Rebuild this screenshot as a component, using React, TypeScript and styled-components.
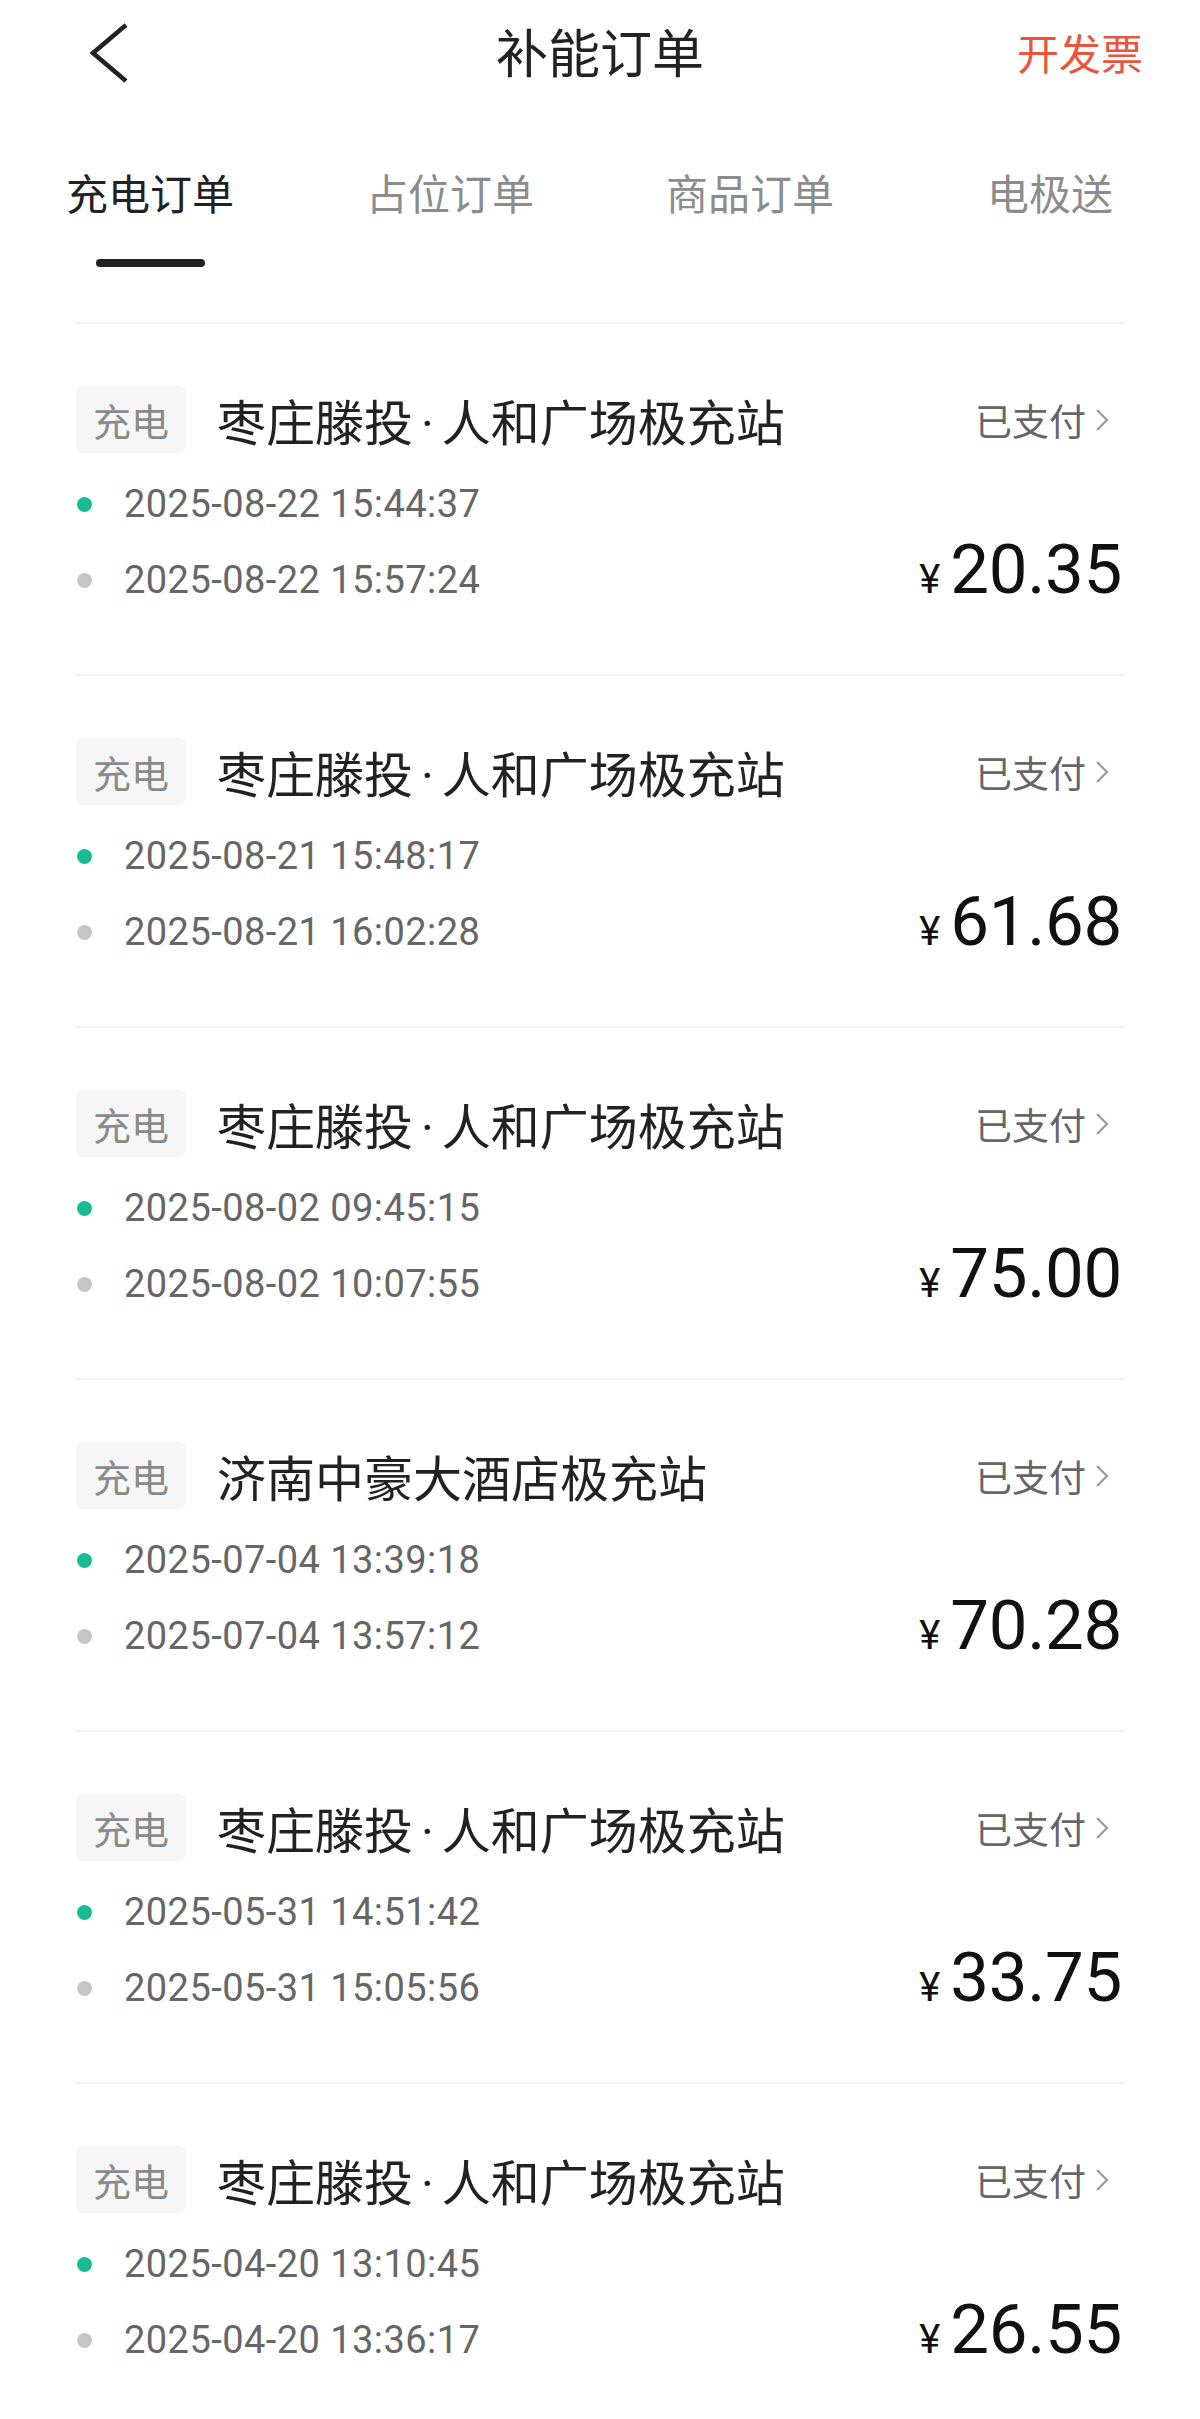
import React from "react";
import styled, { createGlobalStyle } from "styled-components";

const GlobalStyle = createGlobalStyle`
  html, body {
    margin: 0;
    padding: 0;
    background: #ffffff;
  }
  body {
    font-family: "Noto Sans CJK SC", "Noto Sans", sans-serif;
    color: #222;
  }
  * { box-sizing: border-box; }
`;

const Page = styled.div`
  width: 1200px;
  height: 2419px;
  overflow: hidden;
  background: #fff;
`;

const NavBar = styled.header`
  height: 106px;
  display: grid;
  grid-template-columns: 1fr auto 1fr;
  align-items: center;
  padding: 0 57px;
`;

const BackButton = styled.button`
  justify-self: start;
  border: 0;
  background: none;
  padding: 0;
  margin-left: 33px;
  display: flex;
  align-items: center;
  cursor: pointer;
`;

const Title = styled.h1`
  margin: 0 0 5px;
  font-size: 52px;
  font-weight: 400;
  line-height: 1;
  color: #222;
`;

const Action = styled.span`
  justify-self: end;
  font-size: 42px;
  line-height: 1;
  color: #e9553f;
  margin-bottom: 2px;
`;

const TabBar = styled.nav`
  display: grid;
  grid-template-columns: repeat(4, 300px);
  padding: 56px 0 55px;
`;

const Tab = styled.div<{ $active?: boolean }>`
  display: flex;
  flex-direction: column;
  align-items: center;
  font-size: 42px;
  line-height: 60px;
  color: ${(p) => (p.$active ? "#222" : "#8c8c8c")};
  white-space: nowrap;
`;

const Indicator = styled.span<{ $active?: boolean }>`
  margin-top: 37px;
  width: 109px;
  height: 8px;
  border-radius: 4px;
  background: ${(p) => (p.$active ? "#222" : "transparent")};
`;

const List = styled.div`
  margin: 0 76px;
`;

const Card = styled.div`
  border-top: 2px solid #f3f3f3;
  padding: 62px 0 56px;
`;

const CardHeader = styled.div`
  display: flex;
  align-items: center;
  height: 67px;
`;

const Tag = styled.span`
  flex: none;
  width: 110px;
  height: 67px;
  border-radius: 6px;
  background: #f6f6f6;
  color: #8a8a8a;
  font-size: 38px;
  display: flex;
  align-items: center;
  justify-content: center;
`;

const StationName = styled.span`
  margin-left: 31px;
  font-size: 49px;
  color: #222;
  white-space: nowrap;
  flex: 1;
`;

const NameDot = styled.span`
  font-family: Roboto, sans-serif;
  margin: 0 8px;
`;

const Status = styled.span`
  display: flex;
  align-items: center;
  gap: 9px;
  font-size: 37px;
  color: #666;
  padding-right: 15px;
`;

const Body = styled.div`
  margin-top: 13px;
`;

const TimeRow = styled.div`
  display: flex;
  align-items: flex-start;
  justify-content: space-between;
  height: 76px;
`;

const TimeLabel = styled.span`
  display: flex;
  align-items: center;
  gap: 32px;
  height: 76px;
`;

const Dot = styled.span<{ $color: string }>`
  width: 15px;
  height: 15px;
  border-radius: 50%;
  background: ${(p) => p.$color};
  flex: none;
  margin-left: 1px;
`;

const Time = styled.span`
  font-family: Roboto, "Noto Sans", sans-serif;
  font-size: 38px;
  line-height: 76px;
  letter-spacing: 0.45px;
  color: #666;
`;

const Price = styled.span`
  font-family: Roboto, "Noto Sans", sans-serif;
  font-size: 69px;
  line-height: 56px;
  color: #111;
  white-space: nowrap;
  padding-right: 2px;
`;

const Yen = styled.span`
  font-size: 40px;
  margin-right: 10px;
`;

const Amount = styled.span`
  letter-spacing: -0.3px;
`;

type Order = {
  name: string;
  start: string;
  end: string;
  amount: string;
};

const orders: Order[] = [
  { name: "枣庄滕投·人和广场极充站", start: "2025-08-22 15:44:37", end: "2025-08-22 15:57:24", amount: "20.35" },
  { name: "枣庄滕投·人和广场极充站", start: "2025-08-21 15:48:17", end: "2025-08-21 16:02:28", amount: "61.68" },
  { name: "枣庄滕投·人和广场极充站", start: "2025-08-02 09:45:15", end: "2025-08-02 10:07:55", amount: "75.00" },
  { name: "济南中豪大酒店极充站", start: "2025-07-04 13:39:18", end: "2025-07-04 13:57:12", amount: "70.28" },
  { name: "枣庄滕投·人和广场极充站", start: "2025-05-31 14:51:42", end: "2025-05-31 15:05:56", amount: "33.75" },
  { name: "枣庄滕投·人和广场极充站", start: "2025-04-20 13:10:45", end: "2025-04-20 13:36:17", amount: "26.55" },
];

const tabs = ["充电订单", "占位订单", "商品订单", "电极送"];

const BackIcon = () => (
  <svg width="40" height="60" viewBox="0 0 40 60" fill="none">
    <polyline points="36,2 3,30 36,58" stroke="#222" strokeWidth="4.5" fill="none" strokeLinejoin="miter" />
  </svg>
);

const ChevronRight = () => (
  <svg width="14" height="24" viewBox="0 0 14 24" fill="none">
    <polyline points="2,2 12,12 2,22" stroke="#9a9a9a" strokeWidth="2.2" fill="none" />
  </svg>
);

const renderName = (name: string) => {
  const parts = name.split("·");
  return parts.map((part, i) => (
    <React.Fragment key={i}>
      {i > 0 && <NameDot>·</NameDot>}
      {part}
    </React.Fragment>
  ));
};

export default function App() {
  return (
    <Page>
      <GlobalStyle />
      <NavBar>
        <BackButton aria-label="返回">
          <BackIcon />
        </BackButton>
        <Title>补能订单</Title>
        <Action>开发票</Action>
      </NavBar>
      <TabBar>
        {tabs.map((t, i) => (
          <Tab key={t} $active={i === 0}>
            {t}
            <Indicator $active={i === 0} />
          </Tab>
        ))}
      </TabBar>
      <List>
        {orders.map((o, i) => (
          <Card key={i}>
            <CardHeader>
              <Tag>充电</Tag>
              <StationName>{renderName(o.name)}</StationName>
              <Status>
                已支付
                <ChevronRight />
              </Status>
            </CardHeader>
            <Body>
              <TimeRow>
                <TimeLabel>
                  <Dot $color="#17bb95" />
                  <Time>{o.start}</Time>
                </TimeLabel>
              </TimeRow>
              <TimeRow>
                <TimeLabel>
                  <Dot $color="#c6c6c6" />
                  <Time>{o.end}</Time>
                </TimeLabel>
                <Price>
                  <Yen>¥</Yen>
                  <Amount>{o.amount}</Amount>
                </Price>
              </TimeRow>
            </Body>
          </Card>
        ))}
      </List>
    </Page>
  );
}
